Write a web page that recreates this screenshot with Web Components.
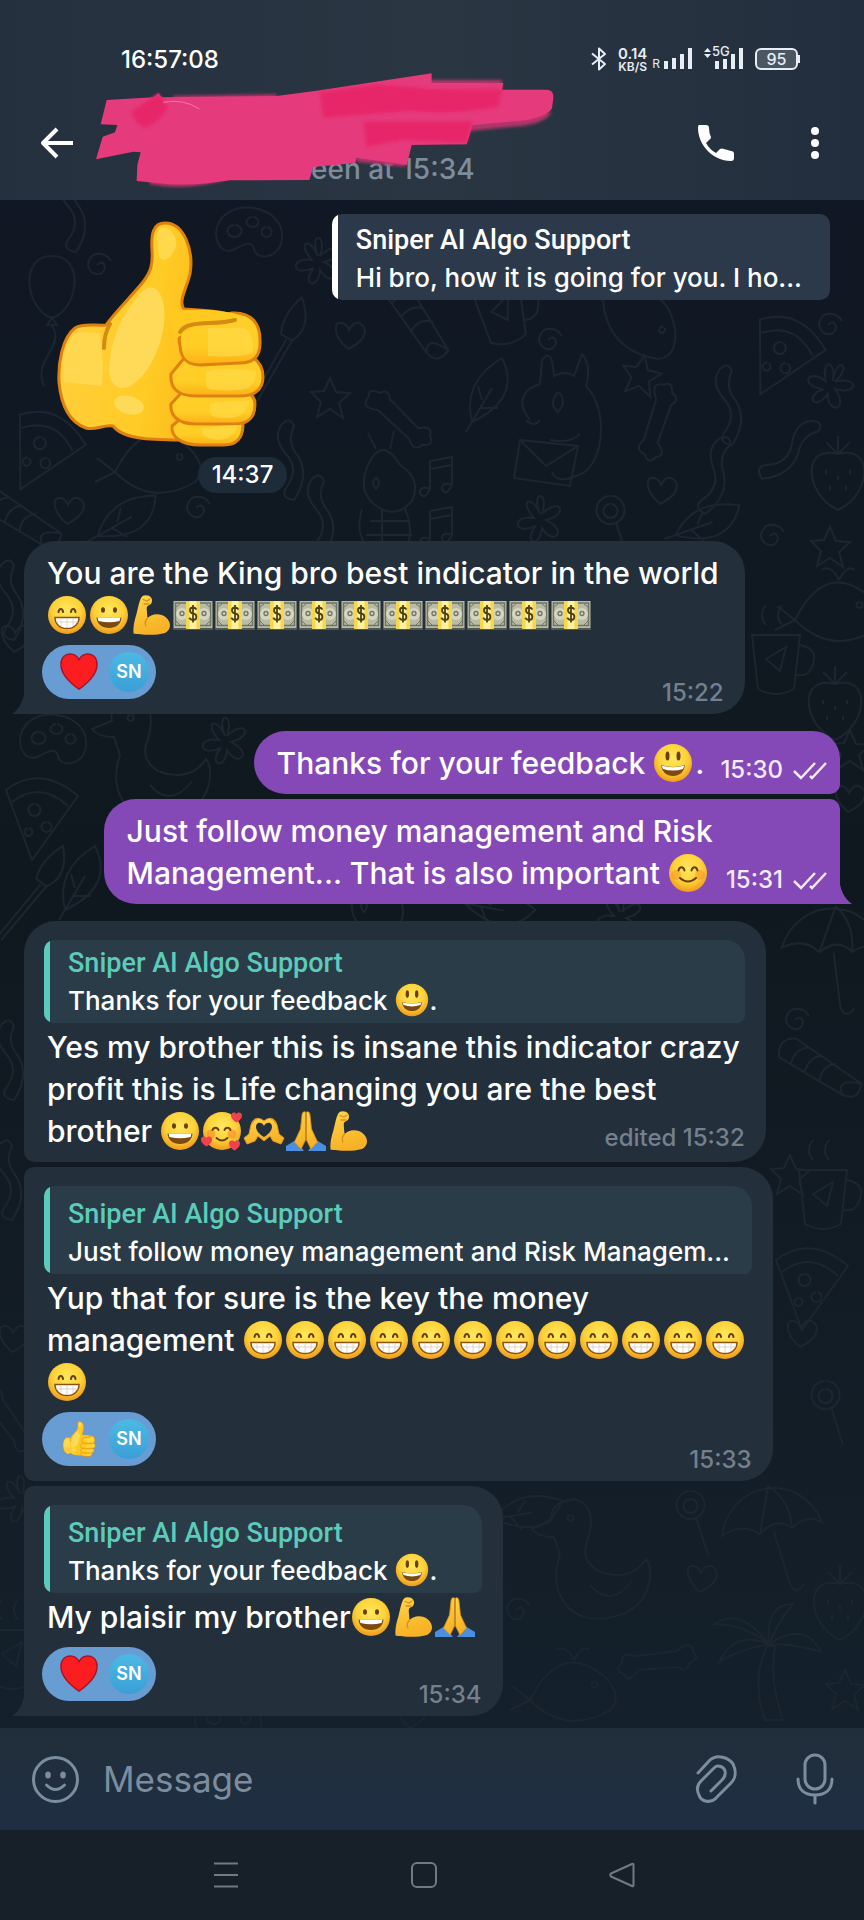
<!DOCTYPE html>
<html lang="en">
<head>
<meta charset="utf-8">
<meta name="viewport" content="width=device-width, initial-scale=1">
<title>Chat</title>
<style>
  body {
    margin: 0;
    background: #111823;
    color: #fff;
    font-family: Inter, "Liberation Sans", sans-serif;
    font-weight: 500;
  }
</style>
</head>
<body>
<chat-app>
  <status-bar slot="top" time="16:57:08"></status-bar>
  <chat-header slot="top" status="last seen at 15:34"></chat-header>

  <sticker-message time="14:37">
    <chat-emoji name="thumb"></chat-emoji>
    <chat-quote slot="quote" light author="Sniper AI Algo Support">Hi bro, how it is going for you. I ho...</chat-quote>
  </sticker-message>

  <chat-message tail time="15:22">You are the King bro best indicator in the world<br><chat-emoji name="beaming"></chat-emoji><chat-emoji name="grinning"></chat-emoji><chat-emoji name="flex"></chat-emoji><chat-emoji name="money"></chat-emoji><chat-emoji name="money"></chat-emoji><chat-emoji name="money"></chat-emoji><chat-emoji name="money"></chat-emoji><chat-emoji name="money"></chat-emoji><chat-emoji name="money"></chat-emoji><chat-emoji name="money"></chat-emoji><chat-emoji name="money"></chat-emoji><chat-emoji name="money"></chat-emoji><chat-emoji name="money"></chat-emoji>
    <chat-reaction slot="reaction" emoji="heart" who="SN"></chat-reaction>
  </chat-message>

  <chat-message out first time="15:30">Thanks for your feedback <chat-emoji name="smiley"></chat-emoji>.</chat-message>
  <chat-message out tail time="15:31">Just follow money management and Risk<br>Management... That is also important <chat-emoji name="blush"></chat-emoji></chat-message>

  <chat-message first time="edited 15:32">
    <chat-quote slot="quote" compact author="Sniper AI Algo Support">Thanks for your feedback <chat-emoji name="smiley"></chat-emoji>.</chat-quote>Yes my brother this is insane this indicator crazy<br>profit this is Life changing you are the best<br>brother <chat-emoji name="grinning"></chat-emoji><chat-emoji name="hearts"></chat-emoji><chat-emoji name="hands"></chat-emoji><chat-emoji name="pray"></chat-emoji><chat-emoji name="flex"></chat-emoji>
  </chat-message>
  <chat-message middle time="15:33">
    <chat-quote slot="quote" author="Sniper AI Algo Support">Just follow money management and Risk Managem...</chat-quote>Yup that for sure is the key the money<br>management <chat-emoji name="beaming"></chat-emoji><chat-emoji name="beaming"></chat-emoji><chat-emoji name="beaming"></chat-emoji><chat-emoji name="beaming"></chat-emoji><chat-emoji name="beaming"></chat-emoji><chat-emoji name="beaming"></chat-emoji><chat-emoji name="beaming"></chat-emoji><chat-emoji name="beaming"></chat-emoji><chat-emoji name="beaming"></chat-emoji><chat-emoji name="beaming"></chat-emoji><chat-emoji name="beaming"></chat-emoji><chat-emoji name="beaming"></chat-emoji><br><chat-emoji name="beaming"></chat-emoji>
    <chat-reaction slot="reaction" emoji="thumb" who="SN"></chat-reaction>
  </chat-message>
  <chat-message tail time="15:34">
    <chat-quote slot="quote" author="Sniper AI Algo Support">Thanks for your feedback <chat-emoji name="smiley"></chat-emoji>.</chat-quote>My plaisir my brother<chat-emoji name="grinning"></chat-emoji><chat-emoji name="flex"></chat-emoji><chat-emoji name="pray"></chat-emoji>
    <chat-reaction slot="reaction" emoji="heart" who="SN"></chat-reaction>
  </chat-message>

  <chat-composer slot="bottom"></chat-composer>
  <nav-bar slot="bottom"></nav-bar>
</chat-app>

<script>
const FACE = `
  <defs><radialGradient id="f" cx=".5" cy=".38" r=".62">
    <stop offset="0" stop-color="#ffe85c"/><stop offset=".6" stop-color="#fdd239"/><stop offset="1" stop-color="#ee9a1c"/>
  </radialGradient></defs>
  <circle cx="20" cy="20" r="19" fill="url(#f)"/>`;

const ARM = '<defs><linearGradient id="s" x1="0" y1="0" x2=".3" y2="1"><stop offset="0" stop-color="#ffd54a"/><stop offset="1" stop-color="#f7b125"/></linearGradient></defs>';

// Small heart, 11 units wide, drawn from its top left
const smallHeart = (x, y) =>
  `<path transform="translate(${x} ${y})" d="M5.500 10.500C1 7.500 0 5.500 0 3.200C0 .5 3.800-.8 5.500 2C7.200-.8 11 .5 11 3.200C11 5.500 10 7.500 5.500 10.500Z" fill="#f0414f"/>`;

const EMOJI = {
  beaming: { label: '😁', art: `${FACE}
    <path d="M11.500 17c.6-4 4-4 4.600 0M23.900 17c.6-4 4-4 4.600 0" fill="none" stroke="#6b3f0c" stroke-width="2" stroke-linecap="round"/>
    <path d="M8 22.500h24c0 6.500-5 11-12 11s-12-4.500-12-11z" fill="#fff" stroke="#8a5312" stroke-width="1.500"/>
    <path d="M9 27h22M14 23v8M20 23v10M26 23v8" stroke="#d8ccbd" stroke-width=".8"/>` },
  grinning: { label: '😀', art: `${FACE}
    <ellipse cx="14" cy="15" rx="2" ry="2.800" fill="#6b3f0c"/><ellipse cx="26" cy="15" rx="2" ry="2.800" fill="#6b3f0c"/>
    <path d="M7.500 22.500h25c-.5 6.500-5.500 10.500-12.500 10.500S8 29 7.500 22.500z" fill="#7a4a10"/>
    <path d="M8.500 22.500h23l-1 3.500q-10.500 2.500-21 0z" fill="#fff"/>` },
  smiley: { label: '😃', art: `${FACE}
    <ellipse cx="14.500" cy="13" rx="2" ry="4.500" fill="#6b3f0c"/><ellipse cx="25.500" cy="13" rx="2" ry="4.500" fill="#6b3f0c"/>
    <path d="M8 22q12 4 24 0c-1 7-5.500 11-12 11S9 29 8 22z" fill="#7a4a10"/>
    <path d="M8.500 22.500q11.500 3.500 23 0l-1.500 3.500q-10 3-20 0z" fill="#fff"/>` },
  blush: { label: '😊', art: `${FACE}
    <circle cx="8" cy="22" r="5" fill="#f77f2c" opacity=".4"/><circle cx="32" cy="22" r="5" fill="#f77f2c" opacity=".4"/>
    <path d="M10.500 17.500c1-4.500 5-4.500 6 0M23.500 17.500c1-4.500 5-4.500 6 0M12 25q8 7 16 0" fill="none" stroke="#6b3f0c" stroke-width="2" stroke-linecap="round"/>` },
  hearts: { label: '🥰', art: `${FACE}
    <circle cx="9" cy="23" r="4.500" fill="#f7772c" opacity=".5"/><circle cx="30" cy="23" r="4.500" fill="#f7772c" opacity=".5"/>
    <path d="M10.500 19c1-3 5-3 6 0M22.500 19c1-3 5-3 6 0M14.500 27q5.500 5 11 0" fill="none" stroke="#6b3f0c" stroke-width="2" stroke-linecap="round"/>
    ${smallHeart(29, 1)}${smallHeart(-1, 25)}${smallHeart(27, 29)}` },
  hands: { label: '🫶', art: `${ARM}
    <path d="M20 10C14 5 8 7 6.500 16L5 23L0 27L3 33L11 30L14 25L20 30L26 25L29 30L37 33L40 27L35 23L33.500 16C32 7 26 5 20 10Z" fill="url(#s)" stroke="#e19a20"/>
    <path d="M20 26C13 22 11 17 12.500 13.500C14.500 10 19 12 20 15C21 12 25.500 10 27.500 13.500C29 17 27 22 20 26Z" fill="#232f3b"/>
    <path d="M8 13q2-5 5-5M32 13q-2-5-5-5" stroke="#d98f1b" fill="none"/>` },
  pray: { label: '🙏', art: `${ARM}
    <path d="M0 35L10 29L18 40H0ZM40 35L30 29L22 40H40Z" fill="#4a8fe0"/>
    <path d="M19.500 1C17 0 16 2 15.800 6L14.500 18L8.500 31L15 38L19.500 29Z" fill="url(#s)" stroke="#d98f1b" stroke-width=".8"/>
    <path d="M20.500 1C23 0 24 2 24.200 6L25.500 18L31.500 31L25 38L20.500 29Z" fill="url(#s)" stroke="#d98f1b" stroke-width=".8"/>` },
  flex: { label: '💪', art: `${ARM}
    <path d="M10 3C12-1 18 0 20 2.500C22 5 21 9 18.500 10C16 11 15.500 12 15.800 15L16.500 23C21 18 30 18 35 22.500C41 28 40 35 34 38C24 41 8 39.500 2.500 38.500C2 30 4 24 5.500 19C7 13 8 7 10 3Z" fill="url(#s)"/>
    <path d="M16.500 23Q13 27 15 31M12 4.500l4 1.500l3-2M13 9h5" fill="none" stroke="#d98f1b" stroke-width="1.300" stroke-linecap="round"/>` },
  money: { label: '💵', art: `
    <path d="M.5 6h39v27h-39z" fill="#b9bba4"/><path d="M2.500 8h35v22.500h-35z" fill="none" stroke="#6f7465" stroke-width="1.500"/>
    <path d="M0 34h40" stroke="#7f826f"/>
    <circle cx="9" cy="19" r="6" fill="#d5d6c0"/><circle cx="31" cy="19" r="6" fill="#d5d6c0"/>
    <circle cx="9" cy="18.500" r="2" fill="none" stroke="#6f7465" stroke-width="1.300"/><circle cx="31" cy="18.500" r="2" fill="none" stroke="#6f7465" stroke-width="1.300"/>
    <path d="M3 12l4-3M37 12l-4-3M3 26l4 4M37 26l-4 4" stroke="#6f7465"/>
    <path d="M13 6h14v28h-14z" fill="#f6d64a"/><path d="M16.500 6h7v28h-7z" fill="#fff0a0"/>
    <path d="M23.500 14.500Q22 12.500 20 12.500C16 12.500 16 18 20 18.500C24.500 19 24.500 25 20 25Q17.500 25 16.200 22.800M20 10v17.500" fill="none" stroke="#4c4216" stroke-width="1.800"/>` },
  heart: { label: '❤️', art: `
    <path d="M20 38C10 31 1 22 1 12C1 3 7 1 11 1C15 1 18 3 20 7C22 3 25 1 29 1C33 1 39 3 39 12C39 22 30 31 20 38Z" fill="#fb1d20" stroke="#a81428" stroke-width="1.500"/>` },
  thumb: { label: '👍', box: '0 0 220 240', art: `
    <defs>
      <linearGradient id="t" x1="0" x2="1" y1="0" y2=".2"><stop offset="0" stop-color="#ffd041"/><stop offset=".6" stop-color="#ffcb25"/><stop offset="1" stop-color="#fbb416"/></linearGradient>
      <linearGradient id="k" x1="0" x2="0" y1="0" y2="1"><stop offset="0" stop-color="#ffd02b"/><stop offset=".65" stop-color="#ffcd24"/><stop offset="1" stop-color="#fbb017"/></linearGradient>
    </defs>
    <g stroke="#df8110" stroke-width="3" stroke-linejoin="round">
      <path d="M115 9C103 9 101 20 102 36C103 50 101 58 93 68C80 84 66 97 56 111C45 112 33 109 25 114C12 124 8 150 9 168C11 190 19 208 36 214C45 217 54 210 63 212C74 226 104 226 140 226L190 150V112C187 96 160 97 134 95C128 88 136 76 140 60C144 36 134 9 115 9Z" fill="url(#t)"/>
      <path d="M135 201H180Q193 203 193 212Q192 231 174 231H150C130 231 121 222 122 212Z" fill="url(#k)"/>
      <path d="M134 176H192Q205 180 205 190C205 204 198 210 184 210H146C128 210 120 202 121 190Z" fill="url(#k)"/>
      <path d="M136 142H200Q213 148 213 163C213 176 204 182 190 182H146C127 182 120 174 121 160Z" fill="url(#k)"/>
      <path d="M130 132C126 114 138 106 158 105L182 99C202 98 210 110 210 126C211 143 203 149 190 149L150 151C136 151 131 144 130 132Z" fill="url(#k)"/>
    </g>
    <path d="M134 96C158 95 178 97 190 101L184 106C166 110 148 108 138 117L125 125L117 94Z" fill="#ffc91f"/>
    <path d="M130 118C138 105 164 112 185 106" fill="none" stroke="#d58a12" stroke-width="4" stroke-linecap="round"/>
    <path d="M54 134Q54 120 60 110" fill="none" stroke="#d58a12" stroke-width="4" stroke-linecap="round"/>
    <path d="M94 76C77 92 63 118 60 146C56 171 69 179 82 171C103 157 117 120 114 94C113 80 105 68 94 76Z" fill="#ffda58"/>
    <path d="M113 14C105 14 107 30 109 42C113 50 121 46 126 32C127 21 120 13 113 14Z" fill="#ffd84b"/>
    <ellipse cx="79" cy="191" rx="15" ry="9" fill="#ffda58" transform="rotate(15 79 191)"/>
    <path d="M28 118C14 126 12 150 14 168L52 172Q54 148 50 119Z" fill="#ffd84f"/>
    <path d="M158 114H194Q204 118 203 139Q190 144 158 142ZM156 158Q175 152 206 157Q206 176 188 176Q160 178 156 173ZM160 190Q178 186 199 187Q196 203 180 204Q160 205 160 198ZM152 215Q170 211 188 211Q183 226 168 226Q152 224 152 218Z" fill="#ffdc4d" opacity=".6"/>` }
};

class ChatEmoji extends HTMLElement {
  constructor() {
    super();
    this.attachShadow({ mode: 'open' });
  }

  connectedCallback() {
    const emoji = EMOJI[this.getAttribute('name')];
    this.shadowRoot.innerHTML = `
      <style>
        :host {
          display: inline-block;
          width: var(--emoji-advance, 42px);
          height: var(--emoji-size, 40px);
          vertical-align: var(--emoji-drop, -9px);
        }
        svg {
          display: block;
          width: var(--emoji-size, 40px);
          height: 100%;
          overflow: visible;
        }
      </style>
      <svg viewBox="${emoji.box || '0 0 40 40'}" role="img" aria-label="${emoji.label}">${emoji.art}</svg>
    `;
  }
}
customElements.define('chat-emoji', ChatEmoji);

class StatusBar extends HTMLElement {
  constructor() {
    super();
    this.attachShadow({ mode: 'open' });
  }

  connectedCallback() {
    this.shadowRoot.innerHTML = `
      <style>
        :host {
          display: flex;
          align-items: center;
          height: 54px;
          padding: 32px 64px 0 121px;
          color: #e6edf5;
          font-size: 24px;
          font-weight: 500;
        }
        time { margin-right: auto; color: #fff; }
        svg { display: block; fill: currentColor; }
        .speed {
          display: grid;
          margin: 0 5px 0 11px;
          font-size: 15px;
          font-weight: 600;
          line-height: 15px;
          text-align: center;
        }
        .speed small { font-size: 12px; line-height: 12px; }
        .signal { display: flex; align-items: flex-end; margin-right: 11px; }
        .signal small { font-size: 12px; line-height: 12px; font-weight: 400; margin-right: 4px; }
        .net { position: relative; }
        .net small { position: absolute; top: -3px; left: 8px; font-size: 13px; font-weight: 500; margin: 0; }
        .battery {
          display: flex;
          align-items: center;
        }
        .battery span {
          box-sizing: border-box;
          width: 43px;
          height: 22px;
          border: 2px solid currentColor;
          border-radius: 6px;
          background: #4b5663;
          font-size: 16px;
          line-height: 18px;
          text-align: center;
        }
        .battery i { width: 2px; height: 8px; background: currentColor; }
      </style>
      <time>${this.getAttribute('time')}</time>
      <svg width="16" height="24" viewBox="0 0 16 24"><path d="M1 6.500L14 17L8 22.500V1.500L14 7L1 17.500" fill="none" stroke="currentColor" stroke-width="2" stroke-linejoin="round"/></svg>
      <div class="speed"><span>0.14</span><small>KB/S</small></div>
      <div class="signal"><small>R</small>
        <svg width="29" height="22" viewBox="0 0 29 22"><path d="M0 13h4v8h-4zM8 10h4v11h-4zM16 6h4v15h-4zM24 0h4v21h-4z"/></svg>
      </div>
      <div class="signal net"><small>5G</small>
        <svg width="40" height="22" viewBox="0 0 40 22"><path d="M3.500 0L7 4H0zM3.500 10L0 6h7zM11 13h4v8h-4zM19 11h4v10h-4zM27 6h4v15h-4zM35 0h4v21h-4z"/></svg>
      </div>
      <div class="battery"><span>95</span><i></i></div>
    `;
  }
}
customElements.define('status-bar', StatusBar);

class ChatHeader extends HTMLElement {
  constructor() {
    super();
    this.attachShadow({ mode: 'open' });
  }

  connectedCallback() {
    this.shadowRoot.innerHTML = `
      <style>
        :host {
          display: flex;
          align-items: center;
          height: 114px;
          padding: 0 40px;
          position: relative;
        }
        button {
          padding: 0;
          border: 0;
          background: none;
          color: #fff;
        }
        svg { display: block; }
        p {
          flex: 1;
          align-self: flex-end;
          margin: 0 0 13px 167px;
          color: #7d8d9c;
          font-size: 28px;
          line-height: 36px;
        }
        .call { margin-right: 71px; }
        .marker {
          position: absolute;
          left: 90px;
          top: -21px;
        }
      </style>
      <button aria-label="Back"><svg width="34" height="32" viewBox="0 0 34 32"><path d="M17 2L3 16L17 30M3 16H33" fill="none" stroke="currentColor" stroke-width="4" stroke-linejoin="round"/></svg></button>
      <p>${this.getAttribute('status')}</p>
      <button class="call" aria-label="Call"><svg width="38" height="38" viewBox="0 0 38 38"><path d="M2 1H9Q12 1 12 4Q12 9 14 13Q14 15 12 16L9 19Q13 26 19 29L23 25Q25 24 27 25L34 27Q37 27 37 30V34Q37 37 34 37C15 37 1 20 1 4Q1 1 2 1Z" fill="currentColor"/></svg></button>
      <button aria-label="More"><svg width="18" height="34" viewBox="0 0 18 34" fill="currentColor"><circle cx="9" cy="5" r="4"/><circle cx="9" cy="17" r="4"/><circle cx="9" cy="29" r="4"/></svg></button>
      <svg class="marker" width="480" height="130" viewBox="0 0 1440 390" aria-hidden="true">
        <defs><filter id="soft"><feGaussianBlur stdDeviation="5"/></filter></defs>
        <g filter="url(#soft)" fill="#b03567"><path d="M250 92L560 88V130H250zM1020 45H1235V80H1020zM800 230L960 240L945 305L800 290zM1130 150L1385 140Q1370 172 1300 182L1140 198zM180 340L420 340Q300 380 180 358z"/></g>
        <path d="M50 105L190 97L205 85L215 97L560 93L690 76L1025 25V54L1240 54L1236 74H1370Q1392 74 1390 100L1386 130Q1375 152 1310 166L1148 180L1130 238L965 240L950 300L800 278L796 294L670 306L658 345L420 346Q300 366 200 354L140 348L142 300L152 262L130 260L18 283L38 215L75 202L82 180L32 178Z" fill="#e53a7b"/>
        <path d="M690 82L860 58L1025 72L1236 74L1225 125Q1100 150 960 138L700 158ZM820 170L1148 170L1130 234L940 225L830 245ZM205 85L235 125Q210 170 165 190Q125 165 126 140Z" fill="#e72869" filter="url(#soft)"/>
        <path d="M220 112Q280 100 328 132" fill="none" stroke="#f07aa6" stroke-width="3"/>
      </svg>
    `;
  }
}
customElements.define('chat-header', ChatHeader);

class ChatQuote extends HTMLElement {
  constructor() {
    super();
    this.attachShadow({ mode: 'open' });
  }

  connectedCallback() {
    this.shadowRoot.innerHTML = `
      <style>
        :host {
          --emoji-advance: 35px;
          --emoji-size: 34px;
          --emoji-drop: -7px;
          --accent: #5ccbbb;
          --fill: #2a3c48;
          display: block;
          box-sizing: border-box;
          padding: 9px 17px 3px 24px;
          border-radius: 10px 20px 8px 10px;
          background: linear-gradient(90deg, var(--accent) 6px, var(--fill) 6px);
          font-size: 26px;
          line-height: 38px;
          white-space: nowrap;
        }
        :host([compact]) { padding-top: 4px; }
        :host([light]) {
          --accent: #fff;
          --fill: #2c394a;
          padding-top: 7px;
          padding-right: 28px;
          border-radius: 10px;
        }
        strong {
          display: block;
          color: var(--accent);
          font: 500 27px/38px Roboto, sans-serif;
        }
      </style>
      <strong>${this.getAttribute('author')}</strong>
      <slot></slot>
    `;
  }
}
customElements.define('chat-quote', ChatQuote);

class ChatReaction extends HTMLElement {
  constructor() {
    super();
    this.attachShadow({ mode: 'open' });
  }

  connectedCallback() {
    this.shadowRoot.innerHTML = `
      <style>
        :host { display: block; }
        button {
          --emoji-advance: 38px;
          --emoji-size: 38px;
          display: flex;
          align-items: center;
          justify-content: space-between;
          width: 114px;
          height: 54px;
          padding: 0 7px 0 18px;
          border: 0;
          border-radius: 27px;
          background: #689dd4;
          color: #fff;
        }
        span {
          width: 40px;
          border-radius: 50%;
          background: linear-gradient(#4cb9e3, #3a9fd6);
          font: 600 18px/40px Inter, sans-serif;
          text-align: center;
        }
      </style>
      <button><chat-emoji name="${this.getAttribute('emoji')}"></chat-emoji><span>${this.getAttribute('who')}</span></button>
    `;
  }
}
customElements.define('chat-reaction', ChatReaction);

class ChatMessage extends HTMLElement {
  constructor() {
    super();
    this.attachShadow({ mode: 'open' });
  }

  connectedCallback() {
    const out = this.hasAttribute('out');
    const quoted = this.querySelector('[slot=quote]');
    const reacted = this.querySelector('[slot=reaction]');
    const checks = out ? '<svg width="36" height="22" viewBox="0 0 36 22"><path d="M2 12L9 19L23 4M18 17L20 19L34 4" fill="none" stroke="currentColor" stroke-width="2.500"/></svg>' : '';
    const meta = `<span class="meta">${this.getAttribute('time')}${checks}</span>`;

    this.shadowRoot.innerHTML = `
      <style>
        :host {
          --bubble: #232f3b;
          display: block;
          box-sizing: border-box;
          position: relative;
          align-self: flex-start;
          max-width: 100%;
          padding: ${quoted ? '19px' : '11px'} 21px ${reacted ? '15px' : '3px'} 20px;
          border-radius: 32px 32px 32px 10px;
          background: var(--bubble);
          font-size: 30px;
          line-height: 42px;
        }
        :host([middle]) { border-radius: 10px 32px 32px 10px; }
        :host([tail]) { border-radius: 10px 32px 32px 0; }
        :host([tail]:first-of-type) { border-top-left-radius: 32px; }
        :host([first]) { margin-top: 12px; }
        :host([out]) {
          --bubble: #8549b7;
          align-self: flex-end;
          padding-right: 12px;
          border-radius: 32px 28px 10px 32px;
        }
        :host([out][tail]) { border-radius: 32px 10px 0 32px; }
        .text {
          display: flow-root;
          padding: ${quoted ? '3px' : '0'} ${out ? '0' : '5px'} 0 3px;
        }
        .meta {
          display: flex;
          align-items: center;
          gap: 9px;
          color: #74808d;
          font-size: 24px;
          line-height: 30px;
          white-space: nowrap;
        }
        .text .meta {
          float: right;
          margin: 13px ${out ? '0' : '-5px'} 6px 16px;
        }
        :host([out]) .meta { color: #f3eafa; }
        footer {
          display: flex;
          align-items: flex-end;
          justify-content: space-between;
          margin: 9px 0 0 -2px;
        }
        footer .meta { margin-bottom: -9px; }
        .tail {
          position: absolute;
          bottom: 0;
          left: -12px;
          color: var(--bubble);
        }
        :host([out]) .tail { left: auto; right: -12px; transform: scaleX(-1); }
      </style>
      <slot name="quote"></slot>
      <div class="text"><slot></slot>${reacted ? '' : meta}</div>
      ${reacted ? `<footer><slot name="reaction"></slot>${meta}</footer>` : ''}
      ${this.hasAttribute('tail') ? '<svg class="tail" width="13" height="28" viewBox="0 0 13 28"><path d="M13 0Q12 20 0 28H13Z" fill="currentColor"/></svg>' : ''}
    `;
  }
}
customElements.define('chat-message', ChatMessage);

class StickerMessage extends HTMLElement {
  constructor() {
    super();
    this.attachShadow({ mode: 'open' });
  }

  connectedCallback() {
    this.shadowRoot.innerHTML = `
      <style>
        :host {
          --emoji-advance: 220px;
          --emoji-size: 240px;
          display: flex;
          justify-content: space-between;
          align-items: flex-start;
          padding: 14px 10px 43px 16px;
        }
        .sticker { width: 247px; line-height: 0; }
        time {
          display: block;
          width: 89px;
          margin: 3px 0 0 auto;
          border-radius: 18px;
          background: #1e2b39;
          font-size: 24px;
          line-height: 36px;
          text-align: center;
        }
      </style>
      <div class="sticker"><slot></slot><time>${this.getAttribute('time')}</time></div>
      <slot name="quote"></slot>
    `;
  }
}
customElements.define('sticker-message', StickerMessage);

// Line doodles, each about 60 units across, stamped over the chat background
const DOODLES = {
  heart: 'M0 12C-18-4-14-20-2-12Q0-10 1-7Q8-20 16-10C20 0 8 8 0 12Z',
  star: 'M0-20L6-6L20-5L9 5L13 20L0 11L-13 19L-9 4L-19-6L-6-7Z',
  spiral: 'M0 0Q6-6 8 2Q6 12-4 8Q-14 0-4-10Q8-14 14-4',
  palette: 'M-30 0C-30-40 40-34 36 4C34 24 10 26 8 14C6 2-8 14-16 16Q-28 16-30 0ZM-12-10a7 6 0 1 0 1 0M6-18a6 5 0 1 0 1 0M20-8a5 5 0 1 0 1 0',
  balloon: 'M0-34C34-34 26 20 0 28C-26 20-34-34 0-34ZM0 28l-5 7h10zM0 36C14 56-20 70-8 96',
  brush: 'M10-40Q26-12 8 4L-4 0Q-6-20 10-40ZM2 4L-20 66M8 4L-16 70M-4 0L8 4',
  bone: 'M-10-24Q-20-40-6-40Q2-46 4-34Q14-30 6-22L2 18Q14 28 4 32Q-2 42-8 32Q-20 30-12 18Z',
  dog: 'M-30 20C-46 0-34-12-20-16L-18-40Q-8-54-6-24Q6-30 14-24L22-46Q32-34 26-14C50 10 44 70 16 76Q-4 84-8 72M-34 20q8 8 14 0M-2-8q10 8 0 20q-10-8 0-20M-40 40L18 46L10 86L-46 78ZM-40 40L-14 66L18 46M-10 40Q10 44 20 34',
  squid: 'M-14-20Q0-50 18-20Q40-6 30 16Q14 34-4 22Q-26 8-14-20M-20 24Q-28 50-12 64M0 24V70M22 22Q34 46 22 70M-12 36H28M-16 50H30M-6-8q6 6 0 12q-6-6 0-12M-6-36l-8-16M8-36l4-18',
  note: 'M-10 14V-14L12-18V10M-10-6L12-10M-10 14q-10-4-10 4q4 8 10-4M12 10q-10-4-10 4q4 8 10-4',
  flower: 'M0-6C-10-30 10-30 2-6C20-24 30-6 6 0C30 12 12 26 2 8C0 30-18 22-4 6C-28 16-28-6-6-2C-22-20-8-26 0-6',
  tube: 'M-24-40L12 24Q22 38 34 24L0-48Q-16-58-24-40ZM12 24Q14 6 34 24M-18-28Q-6-40 6-34M-10-14Q2-26 14-20M-2 2Q8-12 22-6',
  pizza: 'M-34-20Q0-46 38-14L-8 50ZM-28-8Q0-30 28-4M-6-6a6 6 0 1 0 1 0M6 12a5 5 0 1 0 1 0M-12 18a4 4 0 1 0 1 0',
  worm: 'M-8-36Q-18-22-4-6Q10 10-4 28Q-10 38 4 40Q20 16 8-4Q-4-18 4-34Q0-44-8-36Z',
  duck: 'M-30-10C-44 30-18 62 22 52C60 46 66 6 56-6Q40 18 8 6Q-8-4-4-20Q10-60-16-66Q-42-62-38-44L-58-36Q-52-28-36-28ZM-20-50a3 3 0 1 0 1 0M0 20Q20 44 42 16',
  umbrella: 'M-48 6C-40-50 30-60 52-8Q36-16 22-2Q6-14-10 4Q-28-8-48 6ZM-2-44L-10 4M-2-44Q20-30 22-2M4 2L20 54Q26 66 34 54',
  palm: 'M0 70Q-14 30 2-4L10-4Q4 30 18 70ZM4-6Q-30-20-46 12Q-28 0 4-6Q-26-44-50-26Q-22-26 4-6Q0-46 28-46Q14-30 4-6Q40-30 56 2Q32-6 4-6',
  cup: 'M-26-20H22L16 34Q-2 44-20 34ZM22-10Q42-6 34 12Q30 22 18 20M-12-30q-8-10 0-20M4-30q-8-10 0-20M-12 4L8-8L2 16Z',
  berry: 'M0-16C36-26 34 24 0 40C-34 24-36-26 0-16ZM0-16L-12-28M0-16V-34M0-16L12-28M-12 0v4M0 6v4M12 0v4M-8 16v4M8 16v4',
  whale: 'M-40 10Q-10-50 34-14Q54 6 40 20Q-4 46-40 10ZM-40 10L-58-4M-40 10L-60 20M24-8a3 3 0 1 0 1 0M4-30Q-4-46-14-40M4-30Q12-46 20-40',
  leaf: 'M-20 30Q-30-10 10-34Q30 6-20 30ZM-26 40L0-4M-12 16H6M-10 8L-14-6',
  candy: 'M0-14A14 14 0 1 0 1-14M0-6a7 7 0 1 0 1 0M6 12L18 50'
};

// [doodle, x, y, rotation]
const STAMPS = [
  ['balloon', 52, 290, 0], ['palette', 246, 235, 0], ['spiral', 97, 265, 0], ['brush', 285, 335, 10], ['worm', 72, 212, 0],
  ['flower', 318, 262, 0], ['heart', 348, 337, 0], ['tube', 412, 330, -6], ['cup', 502, 305, -14], ['whale', 640, 318, 40], ['spiral', 548, 340, 0],
  ['spiral', 828, 325, 0], ['pizza', 785, 350, 20], ['star', 330, 398, 0], ['star', 641, 375, 10], ['bone', 403, 418, -50], ['leaf', 492, 392, 0],
  ['dog', 560, 400, 0], ['bone', 660, 425, 14], ['worm', 728, 405, 0], ['flower', 830, 386, 30], ['pizza', 45, 445, 20], ['whale', 155, 462, 0],
  ['worm', 290, 460, 0], ['squid', 382, 485, 0], ['note', 440, 475, 0], ['heart', 660, 492, 0], ['worm', 715, 475, 20], ['worm', 790, 450, 50],
  ['berry', 838, 470, 0], ['heart', 67, 512, 0], ['leaf', 130, 520, 30], ['tube', 20, 530, -30], ['note', 440, 525, 0], ['flower', 540, 520, 0],
  ['candy', 610, 510, 0], ['leaf', 710, 525, 40], ['worm', 320, 515, 0], ['spiral', 196, 508, 0], ['spiral', 770, 536, 0], ['star', 830, 547, 0],
  ['whale', 835, 610, 0], ['cup', 778, 655, 0], ['berry', 835, 700, 0], ['heart', 14, 640, 0], ['worm', 10, 600, 0],
  ['palette', 50, 742, 0], ['duck', 150, 765, 0], ['flower', 225, 742, 0], ['pizza', 40, 810, 0], ['leaf', 85, 880, 0], ['heart', 848, 800, 0], ['star', 850, 750, 0],
  ['brush', 40, 880, 20], ['squid', 370, 908, 0], ['leaf', 500, 912, 70], ['flower', 620, 918, 0], ['umbrella', 830, 950, 10], ['tube', 820, 1080, -30],
  ['star', 790, 1175, 0], ['cup', 825, 1190, 0], ['pizza', 810, 1280, 0], ['candy', 825, 1395, 0], ['bone', 12, 1420, -40], ['heart', 12, 1340, 0],
  ['worm', 10, 1060, 0], ['worm', 8, 1180, 0], ['heart', 800, 1335, 0], ['spiral', 795, 1020, 0],
  ['flower', 20, 1500, 0], ['leaf', 530, 1515, 50], ['duck', 590, 1565, 0], ['umbrella', 770, 1530, 0], ['heart', 700, 1580, 0], ['palm', 765, 1650, 0],
  ['bone', 655, 1665, 80], ['whale', 570, 1690, 0], ['berry', 840, 1600, 0], ['candy', 690, 1505, 0],
  ['cup', 14, 1650, 0], ['palette', 225, 1722, 0], ['heart', 410, 1716, 0], ['star', 845, 1690, 0], ['spiral', 516, 1610, 0]
];

class ChatApp extends HTMLElement {
  constructor() {
    super();
    this.attachShadow({ mode: 'open' });
  }

  connectedCallback() {
    const stamps = STAMPS.map(([name, x, y, turn]) =>
      `<path transform="translate(${x} ${y - 200}) rotate(${turn})" d="${DOODLES[name]}"/>`).join('');

    this.shadowRoot.innerHTML = `
      <style>
        :host {
          display: flex;
          flex-direction: column;
          min-height: 100vh;
        }
        header { background: linear-gradient(90deg, #24303e, #2b3643 50%, #222e3d); }
        main {
          flex: 1;
          position: relative;
          overflow: hidden;
          background: linear-gradient(#111825, #10181f 45%, #14202b);
        }
        .doodles {
          position: absolute;
          inset: 0;
          width: 100%;
          height: 100%;
          fill: none;
          stroke: #1b2631;
          stroke-width: 2;
        }
        .feed {
          position: relative;
          display: flex;
          flex-direction: column;
          gap: 5px;
          padding: 0 24px 10px;
        }
      </style>
      <header><slot name="top"></slot></header>
      <main>
        <svg class="doodles" viewBox="0 0 864 1528" preserveAspectRatio="xMidYMin slice" aria-hidden="true">${stamps}</svg>
        <div class="feed"><slot></slot></div>
      </main>
      <slot name="bottom"></slot>
    `;
  }
}
customElements.define('chat-app', ChatApp);

class ChatComposer extends HTMLElement {
  constructor() {
    super();
    this.attachShadow({ mode: 'open' });
  }

  connectedCallback() {
    this.shadowRoot.innerHTML = `
      <style>
        :host {
          display: flex;
          align-items: center;
          height: 102px;
          padding: 0 30px 0 31px;
          background: linear-gradient(#212e3a, #1f2e43);
          color: #7b8d9f;
        }
        button { padding: 0; border: 0; background: none; color: inherit; }
        svg { display: block; fill: none; stroke: currentColor; stroke-width: 3; stroke-linecap: round; }
        input {
          flex: 1;
          min-width: 0;
          margin: 0 23px;
          padding: 0;
          border: 0;
          outline: 0;
          background: none;
          color: #fff;
          font: 35px/48px Inter, sans-serif;
        }
        input::placeholder { color: #7b8d9f; opacity: 1; }
        .attach { margin-right: 59px; }
      </style>
      <button aria-label="Emoji"><svg width="49" height="49" viewBox="0 0 49 49"><circle cx="24.500" cy="24.500" r="22"/><path d="M15.500 30q9 9 18 0"/><g fill="currentColor" stroke="none"><ellipse cx="17" cy="20" rx="2.800" ry="3.500"/><ellipse cx="32" cy="20" rx="2.800" ry="3.500"/></g></svg></button>
      <input type="text" placeholder="Message" aria-label="Message">
      <button class="attach" aria-label="Attach"><svg width="42" height="48" viewBox="0 0 42 48"><path d="M3 18L14 6C22-2 34 3 38 9C42 17 40 24 36 28L22 42C16 49 6 47 4 40C1 34 2 30 6 26L19 13C23 9 29 12 30 16C31 20 30 22 27 25L16 36"/></svg></button>
      <button aria-label="Voice message"><svg width="38" height="52" viewBox="0 0 38 52"><rect x="9" y="2" width="20" height="34" rx="10"/><path d="M2 26C2 37 9 42 19 42S36 37 36 26M19 42V50"/></svg></button>
    `;
  }
}
customElements.define('chat-composer', ChatComposer);

class NavBar extends HTMLElement {
  constructor() {
    super();
    this.attachShadow({ mode: 'open' });
  }

  connectedCallback() {
    this.shadowRoot.innerHTML = `
      <style>
        :host {
          display: flex;
          align-items: center;
          justify-content: center;
          gap: 172px;
          height: 90px;
          padding-right: 16px;
          background: #171f28;
          color: #707a83;
        }
        button { padding: 0; border: 0; background: none; color: inherit; }
        svg { display: block; fill: none; stroke: currentColor; stroke-width: 2; stroke-linejoin: round; }
      </style>
      <button aria-label="Recents"><svg width="26" height="26" viewBox="0 0 26 26"><path d="M1 1.500H25M1 13H25M1 24.500H25"/></svg></button>
      <button aria-label="Home"><svg width="26" height="26" viewBox="0 0 26 26"><rect x="1" y="1" width="24" height="24" rx="5"/></svg></button>
      <button aria-label="Back"><svg width="26" height="26" viewBox="0 0 26 26"><path d="M23 2Q24.500 1 24.500 3V23Q24.500 25 23 24L2 14.500Q.5 13 2 11.500Z"/></svg></button>
    `;
  }
}
customElements.define('nav-bar', NavBar);
</script>
</body>
</html>
